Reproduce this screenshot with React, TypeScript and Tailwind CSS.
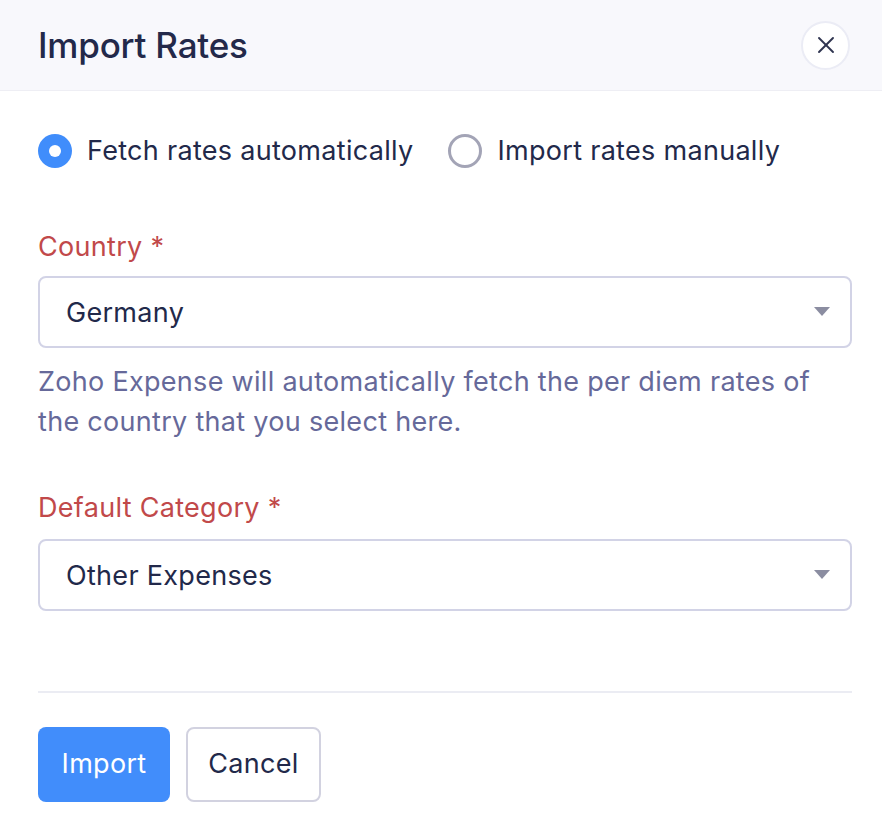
import { useState } from "react";
import { X } from "lucide-react";

const Caret = () => (
  <svg width="16" height="10" viewBox="0 0 16 10" className="shrink-0">
    <path d="M0 0 H16 L8 9 Z" fill="#8b8da1" />
  </svg>
);

const Radio = ({ checked }: { checked: boolean }) =>
  checked ? (
    <span className="w-[34px] h-[34px] rounded-full bg-[#408dfb] flex items-center justify-center shrink-0">
      <span className="w-[12px] h-[12px] rounded-full bg-white" />
    </span>
  ) : (
    <span className="w-[34px] h-[34px] rounded-full border-[3px] border-[#a3a4b6] bg-white shrink-0" />
  );

const SelectBox = ({ value }: { value: string }) => (
  <div className="h-[72px] w-full rounded-[8px] border-2 border-[#d2d3e6] bg-white pl-[26px] pr-[20px] flex items-center justify-between">
    <span className="pt-[3px] text-[27px] tracking-[0.3px] text-[#22294a]">{value}</span>
    <Caret />
  </div>
);

export default function App() {
  const [mode, setMode] = useState("auto");

  return (
    <div className="w-[882px] h-[830px] bg-white font-['Inter',sans-serif] flex flex-col">
      <div className="h-[91px] bg-[#f8f8fc] border-b border-[#eeeef4] pl-[38px] pr-[32px] flex items-center justify-between shrink-0">
        <h1 className="text-[35px] font-medium text-[#23294a] tracking-[-0.2px]">Import Rates</h1>
        <button className="w-[49px] h-[49px] rounded-full bg-white border-2 border-[#ebecf5] flex items-center justify-center">
          <X size={28} strokeWidth={1.6} color="#2f3450" />
        </button>
      </div>

      <div className="pl-[38px] pr-[30px] pt-[40px] flex flex-col text-[27px] tracking-[0.3px]">
        <div className="flex items-center gap-[35px]">
          <label className="flex items-center gap-[15px] cursor-pointer" onClick={() => setMode("auto")}>
            <Radio checked={mode === "auto"} />
            <span className="text-[#22294a]">Fetch rates automatically</span>
          </label>
          <label className="flex items-center gap-[15px] cursor-pointer" onClick={() => setMode("manual")}>
            <Radio checked={mode === "manual"} />
            <span className="text-[#22294a]">Import rates manually</span>
          </label>
        </div>

        <div className="mt-[57px] leading-[36px] text-[#c1494a]">Country *</div>
        <div className="mt-[11px]">
          <SelectBox value="Germany" />
        </div>
        <p className="mt-[14px] leading-[40px] text-[#66699a] pr-[30px]">
          Zoho Expense will automatically fetch the per diem rates of the country that you select here.
        </p>

        <div className="mt-[48px] leading-[36px] text-[#c1494a]">Default Category *</div>
        <div className="mt-[13px]">
          <SelectBox value="Other Expenses" />
        </div>

        <div className="mt-[80px] h-[2px] bg-[#ebecf3]" />

        <div className="mt-[34px] flex gap-[16px]">
          <button className="h-[75px] w-[132px] rounded-[8px] bg-[#418dfb] text-white">Import</button>
          <button className="h-[75px] w-[135px] rounded-[8px] bg-white border-2 border-[#d2d2e0] text-[#22294a]">Cancel</button>
        </div>
      </div>
    </div>
  );
}
